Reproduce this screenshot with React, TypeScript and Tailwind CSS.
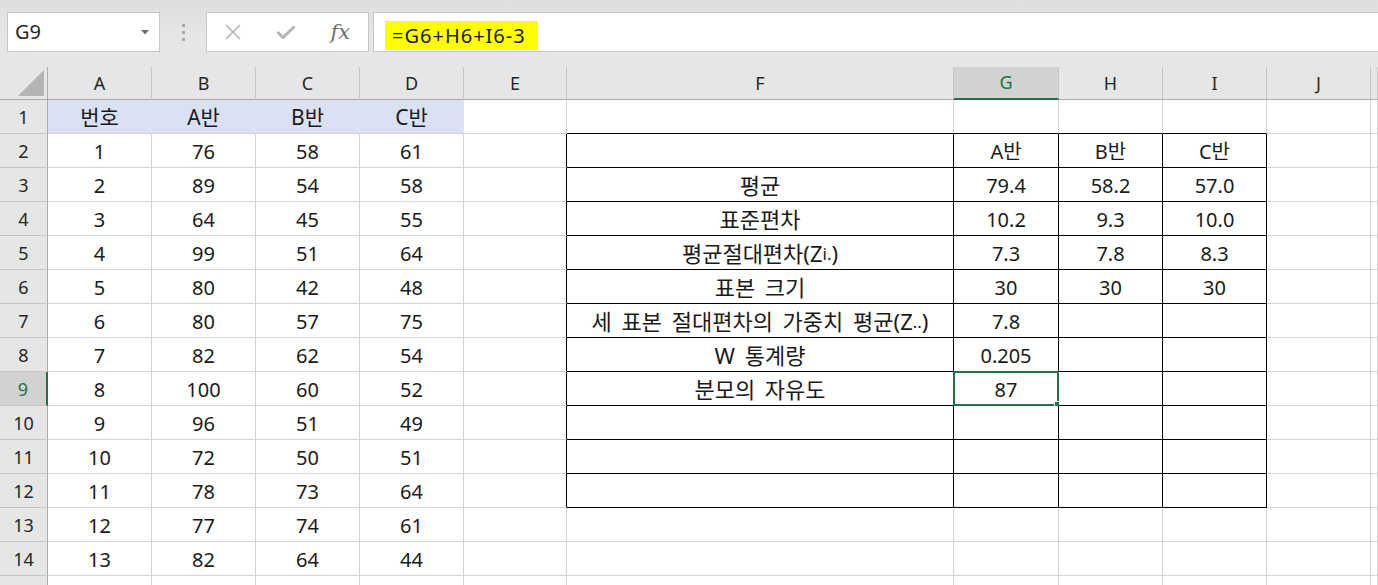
import type { ReactNode } from "react";

const FONT = { fontFamily: '"Noto Sans", "Noto Sans CJK KR", sans-serif' };

const LETTERS = ["A", "B", "C", "D", "E", "F", "G", "H", "I", "J", ""];

const LEFT: (string | number)[][] = [
  ["번호", "A반", "B반", "C반"],
  [1, 76, 58, 61],
  [2, 89, 54, 58],
  [3, 64, 45, 55],
  [4, 99, 51, 64],
  [5, 80, 42, 48],
  [6, 80, 57, 75],
  [7, 82, 62, 54],
  [8, 100, 60, 52],
  [9, 96, 51, 49],
  [10, 72, 50, 51],
  [11, 78, 73, 64],
  [12, 77, 74, 61],
  [13, 82, 64, 44],
  ["", "", "", ""],
];

const Sub = ({ children }: { children: ReactNode }) => (
  <span className="text-[17px] align-[-6px] leading-none [word-spacing:0]">{children}</span>
);

// F..I, rows 2..12
const RIGHT: ReactNode[][] = [
  ["", "A반", "B반", "C반"],
  ["평균", "79.4", "58.2", "57.0"],
  ["표준편차", "10.2", "9.3", "10.0"],
  [<>평균절대편차(Z<Sub>i.</Sub>)</>, "7.3", "7.8", "8.3"],
  ["표본 크기", "30", "30", "30"],
  [<>세 표본 절대편차의 가중치 평균(Z<Sub>..</Sub>)</>, "7.8", "", ""],
  ["W 통계량", "0.205", "", ""],
  ["분모의 자유도", "87", "", ""],
  ["", "", "", ""],
  ["", "", "", ""],
  ["", "", "", ""],
];

function cellContent(r: number, c: number): ReactNode {
  if (c >= 1 && c <= 4) return LEFT[r - 1][c - 1];
  if (c >= 6 && c <= 9 && r >= 2 && r <= 12) return RIGHT[r - 2][c - 6];
  return "";
}

function cellClass(r: number, c: number) {
  const inTable = c >= 6 && c <= 9 && r >= 2 && r <= 12;
  let right = "border-r-[#d4d4d4]";
  let bottom = "border-b-[#d4d4d4]";
  let bg = "bg-white";
  if (inTable) {
    right = "border-r-black";
    bottom = "border-b-black";
  }
  if (r === 1 && c >= 6 && c <= 9) bottom = "border-b-black";
  if (c === 5 && r >= 2 && r <= 12) right = "border-r-black";
  if (r === 1 && c >= 1 && c <= 4) {
    bg = "bg-[#d9e1f2]";
    right = "border-r-[#d9e1f2]";
  }
  const size = c === 6 ? "text-[22px] [word-spacing:4px]" : r === 1 ? "text-[21px]" : "text-[20px]";
  return `${bg} ${right} ${bottom} ${size}`;
}

function XIcon() {
  return (
    <svg width="18" height="16" viewBox="0 0 18 16" fill="none" stroke="#b4b4b4" strokeWidth="1.6">
      <path d="M2 1 L16 15 M16 1 L2 15" />
    </svg>
  );
}

function CheckIcon() {
  return (
    <svg width="20" height="14" viewBox="0 0 20 14" fill="none" stroke="#b4b4b4" strokeWidth="3" strokeLinejoin="miter">
      <path d="M1.5 7 L7 12.5 L18.5 1.5" />
    </svg>
  );
}

export default function App() {
  const rows = Array.from({ length: 15 }, (_, i) => i + 1);
  const cols = Array.from({ length: 11 }, (_, i) => i + 1);

  return (
    <div className="w-[1378px] h-[585px] overflow-hidden bg-[#e6e6e6] text-[#1a1a1a]" style={FONT}>
      {/* formula bar */}
      <div className="h-[67px] pt-[12px] flex items-start bg-gradient-to-b from-[#dedede] via-[#e6e6e6] to-[#e6e6e6]">
        <div className="ml-[7px] w-[153px] h-[40px] bg-white border border-[#c6c6c6] flex items-center justify-between pl-[7px] pr-[10px]">
          <span className="text-[20px] text-[#262626]">G9</span>
          <svg width="8" height="5" viewBox="0 0 8 5">
            <polygon points="0,0 8,0 4,4.5" fill="#6e6e6e" />
          </svg>
        </div>
        <div className="w-[46px] h-[40px] flex flex-col items-center justify-center gap-[4px]">
          <span className="w-[3px] h-[3px] bg-[#a8a8a8]" />
          <span className="w-[3px] h-[3px] bg-[#a8a8a8]" />
          <span className="w-[3px] h-[3px] bg-[#a8a8a8]" />
        </div>
        <div className="w-[163px] h-[40px] bg-white border border-[#c6c6c6] flex items-center justify-between pl-[17px] pr-[18px]">
          <XIcon />
          <CheckIcon />
          <span className="text-[21px] italic text-[#6e6e6e] leading-none" style={{ fontFamily: '"DejaVu Serif", "Liberation Serif", serif' }}>
            fx
          </span>
        </div>
        <div className="ml-[4px] flex-1 h-[40px] bg-white border-y border-l border-[#c6c6c6] flex items-center pl-[11px]">
          <span className="bg-[#ffff00] h-[29px] pl-[7px] pr-[12px] flex items-center text-[20px] tracking-[1px] text-[#1a1a1a] mt-[7px]">=G6+H6+I6-3</span>
        </div>
      </div>

      {/* sheet */}
      <div className="grid grid-cols-[48px_104px_104px_104px_104px_103px_387px_105px_104px_104px_104px_1fr]">
        {/* corner */}
        <div className="h-[33px] bg-[#e6e6e6] border-r border-b border-r-[#ababab] border-b-[#ababab] flex items-end justify-end pr-[3px] pb-[3px]">
          <svg width="26" height="26" viewBox="0 0 26 26">
            <polygon points="26,0 26,26 0,26" fill="#b4b4b4" />
          </svg>
        </div>
        {LETTERS.map((l, i) =>
          l === "G" ? (
            <div key={i} className="h-[33px] bg-[#d2d2d2] border-r border-r-[#c6c6c6] border-b-2 border-b-[#217346] flex items-center justify-center text-[18px] text-[#217346]">
              {l}
            </div>
          ) : (
            <div key={i} className="h-[33px] bg-[#e6e6e6] border-r border-b border-r-[#c6c6c6] border-b-[#ababab] flex items-center justify-center text-[18px] text-[#262626]">
              {l}
            </div>
          )
        )}

        {rows.map((r) => (
          <RowCells key={r} r={r} cols={cols} />
        ))}
      </div>
    </div>
  );
}

function RowCells({ r, cols }: { r: number; cols: number[] }) {
  return (
    <>
      {r === 9 ? (
        <div className="h-[34px] pt-[2px] bg-[#d2d2d2] border-r-2 border-b border-r-[#217346] border-b-[#c6c6c6] flex items-center justify-center text-[18px] text-[#217346]">
          {r}
        </div>
      ) : (
        <div className="h-[34px] pt-[2px] bg-[#e6e6e6] border-r border-b border-r-[#ababab] border-b-[#c6c6c6] flex items-center justify-center text-[18px] text-[#262626]">
          {r < 15 ? r : ""}
        </div>
      )}
      {cols.map((c) => (
        <div
          key={c}
          className={`relative h-[34px] pt-[2px] border-r border-b ${cellClass(r, c)} flex items-center justify-center whitespace-nowrap`}
        >
          {cellContent(r, c)}
          {r === 9 && c === 7 && (
            <div className="absolute -top-[1px] -left-[1px] -right-[1px] -bottom-[1px] border-2 border-[#217346]">
              <div className="absolute -right-[5px] -bottom-[5px] w-[8px] h-[8px] bg-[#217346] border border-white" />
            </div>
          )}
        </div>
      ))}
    </>
  );
}
